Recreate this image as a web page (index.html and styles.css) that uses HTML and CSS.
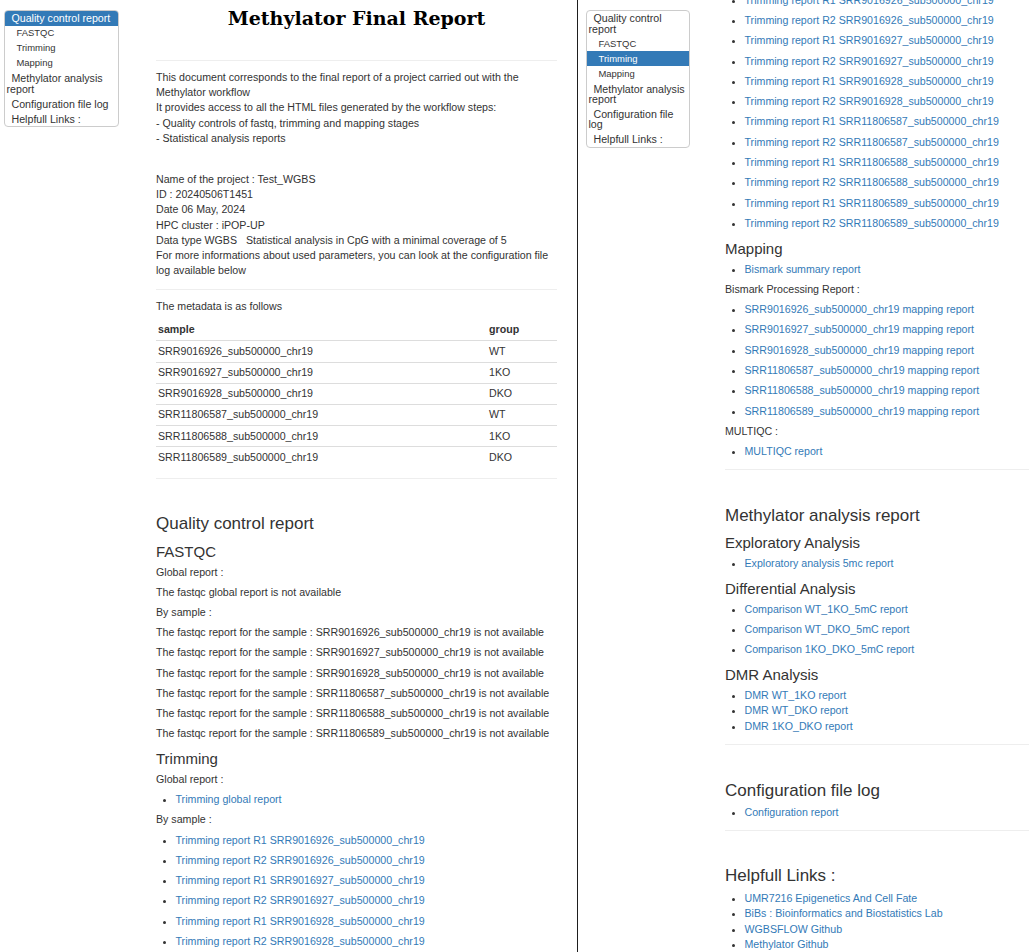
FILE: index.html
```html
<!DOCTYPE html>
<html lang="en">
<head>
<meta charset="utf-8">
<title>Methylator Final Report</title>
<link rel="stylesheet" href="styles.css">
</head>
<body>
<div class="pane pane-left">
  <ul class="toc">
    <li class="toc-item toc-active">Quality control report</li>
    <li class="toc-item toc-sub">FASTQC</li>
    <li class="toc-item toc-sub">Trimming</li>
    <li class="toc-item toc-sub">Mapping</li>
    <li class="toc-item">Methylator analysis report</li>
    <li class="toc-item">Configuration file log</li>
    <li class="toc-item">Helpfull Links :</li>
  </ul>
  <main class="content">
    <h1 class="title">Methylator Final Report</h1>
    <hr class="rule">
    <p class="intro">This document corresponds to the final report of a project carried out with the Methylator workflow<br>It provides access to all the HTML files generated by the workflow steps:<br>- Quality controls of fastq, trimming and mapping stages<br>- Statistical analysis reports</p>
    <p class="intro intro-second">Name of the project : Test_WGBS<br>ID : 20240506T1451<br>Date 06 May, 2024<br>HPC cluster : iPOP-UP<br>Data type WGBS &nbsp; Statistical analysis in CpG with a minimal coverage of 5<br>For more informations about used parameters, you can look at the configuration file log available below</p>
    <hr class="rule">
    <p>The metadata is as follows</p>
    <table class="meta">
      <thead><tr><th>sample</th><th class="col-group">group</th></tr></thead>
      <tbody>
        <tr><td>SRR9016926_sub500000_chr19</td><td>WT</td></tr>
        <tr><td>SRR9016927_sub500000_chr19</td><td>1KO</td></tr>
        <tr><td>SRR9016928_sub500000_chr19</td><td>DKO</td></tr>
        <tr><td>SRR11806587_sub500000_chr19</td><td>WT</td></tr>
        <tr><td>SRR11806588_sub500000_chr19</td><td>1KO</td></tr>
        <tr><td>SRR11806589_sub500000_chr19</td><td>DKO</td></tr>
      </tbody>
    </table>
    <hr class="rule">
    <h3>Quality control report</h3>
    <h4>FASTQC</h4>
    <p>Global report :</p>
    <p>The fastqc global report is not available</p>
    <p>By sample :</p>
    <p>The fastqc report for the sample : SRR9016926_sub500000_chr19 is not available</p>
    <p>The fastqc report for the sample : SRR9016927_sub500000_chr19 is not available</p>
    <p>The fastqc report for the sample : SRR9016928_sub500000_chr19 is not available</p>
    <p>The fastqc report for the sample : SRR11806587_sub500000_chr19 is not available</p>
    <p>The fastqc report for the sample : SRR11806588_sub500000_chr19 is not available</p>
    <p>The fastqc report for the sample : SRR11806589_sub500000_chr19 is not available</p>
    <h4>Trimming</h4>
    <p>Global report :</p>
    <ul class="links">
      <li><a href="#">Trimming global report</a></li>
    </ul>
    <p>By sample :</p>
    <ul class="links">
      <li><a href="#">Trimming report R1 SRR9016926_sub500000_chr19</a></li>
      <li><a href="#">Trimming report R2 SRR9016926_sub500000_chr19</a></li>
      <li><a href="#">Trimming report R1 SRR9016927_sub500000_chr19</a></li>
      <li><a href="#">Trimming report R2 SRR9016927_sub500000_chr19</a></li>
      <li><a href="#">Trimming report R1 SRR9016928_sub500000_chr19</a></li>
      <li><a href="#">Trimming report R2 SRR9016928_sub500000_chr19</a></li>
      <li><a href="#">Trimming report R1 SRR11806587_sub500000_chr19</a></li>
      <li><a href="#">Trimming report R2 SRR11806587_sub500000_chr19</a></li>
    </ul>
  </main>
</div>
<div class="pane pane-right">
  <ul class="toc">
    <li class="toc-item">Quality control report</li>
    <li class="toc-item toc-sub">FASTQC</li>
    <li class="toc-item toc-sub toc-active">Trimming</li>
    <li class="toc-item toc-sub">Mapping</li>
    <li class="toc-item">Methylator analysis report</li>
    <li class="toc-item">Configuration file log</li>
    <li class="toc-item">Helpfull Links :</li>
  </ul>
  <main class="content">
    <ul class="links">
      <li><a href="#">Trimming report R1 SRR9016926_sub500000_chr19</a></li>
      <li><a href="#">Trimming report R2 SRR9016926_sub500000_chr19</a></li>
      <li><a href="#">Trimming report R1 SRR9016927_sub500000_chr19</a></li>
      <li><a href="#">Trimming report R2 SRR9016927_sub500000_chr19</a></li>
      <li><a href="#">Trimming report R1 SRR9016928_sub500000_chr19</a></li>
      <li><a href="#">Trimming report R2 SRR9016928_sub500000_chr19</a></li>
      <li><a href="#">Trimming report R1 SRR11806587_sub500000_chr19</a></li>
      <li><a href="#">Trimming report R2 SRR11806587_sub500000_chr19</a></li>
      <li><a href="#">Trimming report R1 SRR11806588_sub500000_chr19</a></li>
      <li><a href="#">Trimming report R2 SRR11806588_sub500000_chr19</a></li>
      <li><a href="#">Trimming report R1 SRR11806589_sub500000_chr19</a></li>
      <li><a href="#">Trimming report R2 SRR11806589_sub500000_chr19</a></li>
    </ul>
    <h4>Mapping</h4>
    <ul class="links">
      <li><a href="#">Bismark summary report</a></li>
    </ul>
    <p>Bismark Processing Report :</p>
    <ul class="links">
      <li><a href="#">SRR9016926_sub500000_chr19 mapping report</a></li>
      <li><a href="#">SRR9016927_sub500000_chr19 mapping report</a></li>
      <li><a href="#">SRR9016928_sub500000_chr19 mapping report</a></li>
      <li><a href="#">SRR11806587_sub500000_chr19 mapping report</a></li>
      <li><a href="#">SRR11806588_sub500000_chr19 mapping report</a></li>
      <li><a href="#">SRR11806589_sub500000_chr19 mapping report</a></li>
    </ul>
    <p>MULTIQC :</p>
    <ul class="links">
      <li><a href="#">MULTIQC report</a></li>
    </ul>
    <hr class="rule">
    <h3>Methylator analysis report</h3>
    <h4>Exploratory Analysis</h4>
    <ul class="links">
      <li><a href="#">Exploratory analysis 5mc report</a></li>
    </ul>
    <h4>Differential Analysis</h4>
    <ul class="links">
      <li><a href="#">Comparison WT_1KO_5mC report</a></li>
      <li><a href="#">Comparison WT_DKO_5mC report</a></li>
      <li><a href="#">Comparison 1KO_DKO_5mC report</a></li>
    </ul>
    <h4>DMR Analysis</h4>
    <ul class="links tight">
      <li><a href="#">DMR WT_1KO report</a></li>
      <li><a href="#">DMR WT_DKO report</a></li>
      <li><a href="#">DMR 1KO_DKO report</a></li>
    </ul>
    <hr class="rule">
    <h3>Configuration file log</h3>
    <ul class="links">
      <li><a href="#">Configuration report</a></li>
    </ul>
    <hr class="rule">
    <h3>Helpfull Links :</h3>
    <ul class="links tight">
      <li><a href="#">UMR7216 Epigenetics And Cell Fate</a></li>
      <li><a href="#">BiBs : Bioinformatics and Biostatistics Lab</a></li>
      <li><a href="#">WGBSFLOW Github</a></li>
      <li><a href="#">Methylator Github</a></li>
    </ul>
  </main>
</div>
</body>
</html>
```

FILE: styles.css
```css
* {
  box-sizing: border-box;
}

html,
body {
  margin: 0;
  padding: 0;
}

body {
  width: 1029px;
  height: 952px;
  overflow: hidden;
  display: flex;
  background: #fff;
  color: #333;
  font-family: "Liberation Sans", Arial, Helvetica, sans-serif;
  font-size: 10.65px;
  line-height: 15.2px;
}

a {
  color: #337ab7;
  text-decoration: none;
}

/* two side-by-side views of the report */
.pane {
  height: 952px;
  overflow: hidden;
  display: flex;
  align-items: flex-start;
  flex: none;
}

.pane-left {
  width: 578px;
  border-right: 1px solid #1e1e1e;
}

.pane-right {
  flex: 1;
}

/* table of contents */
.toc {
  flex: none;
  margin: 10px 0 0;
  padding: 0;
  list-style: none;
  border: 1px solid #ccc;
  border-radius: 4px;
  overflow: hidden;
  background: #fff;
}

.pane-left .toc {
  margin-left: 4px;
  width: 115px;
}

.pane-right .toc {
  margin-left: 8px;
  width: 104px;
}

.toc-item {
  padding: 2.4px 0 2.4px 1.5px;
  text-indent: 5px;
  font-size: 10.65px;
  line-height: 10.2px;
  color: #333;
}

.toc-sub {
  padding-left: 6.5px;
  font-size: 9.45px;
}

.toc-active {
  background: #337ab7;
  color: #fff;
}

/* main column */
.content {
  flex: none;
}

.pane-left .content {
  margin-left: 37px;
  width: 401px;
}

.pane-right .content {
  margin-left: 35px;
  width: 330px;
  margin-top: -7.3px;
}

.title {
  font-family: "DejaVu Serif", serif;
  font-weight: bold;
  font-size: 19px;
  line-height: 24px;
  text-align: center;
  margin: 6px 0 30px;
  color: #000;
}

.rule {
  border: 0;
  border-top: 1px solid #eee;
  margin: 9.5px 0 9px;
  height: 0;
}

p {
  margin: 0 0 5px;
}

.intro {
  margin: 0 0 11px;
}

.intro-second {
  margin-top: 26px;
}

h3 {
  font-size: 17px;
  line-height: 18.7px;
  font-weight: 500;
  margin: 36.8px 0 4.5px;
}

h4 {
  font-size: 15px;
  line-height: 16.5px;
  font-weight: 500;
  margin: 10px 0 4px;
}

/* metadata table */
.meta {
  width: 100%;
  border-collapse: collapse;
  margin: 0 0 10px;
}

.meta th,
.meta td {
  text-align: left;
  padding: 2.5px 2px;
  line-height: 15.2px;
  vertical-align: top;
}

.meta th {
  font-weight: bold;
  padding-bottom: 3px;
  border-bottom: 1px solid #ddd;
}

.meta td {
  border-top: 1px solid #ddd;
}

.meta .col-group {
  width: 70px;
}

/* link lists */
.links {
  margin: 0;
  padding-left: 19.5px;
}

.links li {
  margin-bottom: 5.1px;
}

.links.tight li {
  margin-bottom: 0;
  line-height: 15.5px;
}
```
